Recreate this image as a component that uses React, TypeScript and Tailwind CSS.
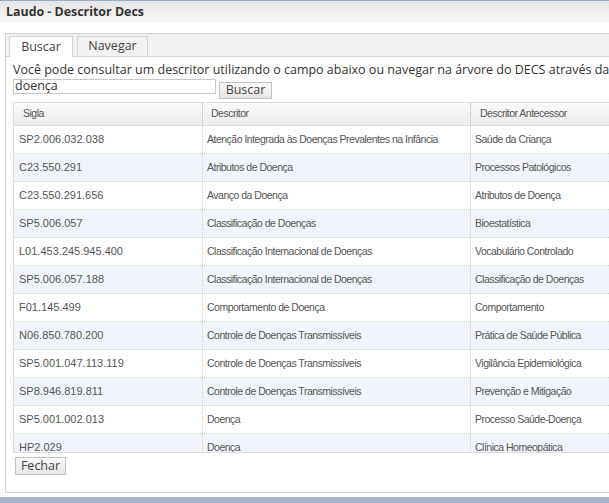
const rows = [
  ["SP2.006.032.038", "Atenção Integrada às Doenças Prevalentes na Infância", "Saúde da Criança"],
  ["C23.550.291", "Atributos de Doença", "Processos Patológicos"],
  ["C23.550.291.656", "Avanço da Doença", "Atributos de Doença"],
  ["SP5.006.057", "Classificação de Doenças", "Bioestatística"],
  ["L01.453.245.945.400", "Classificação Internacional de Doenças", "Vocabulário Controlado"],
  ["SP5.006.057.188", "Classificação Internacional de Doenças", "Classificação de Doenças"],
  ["F01.145.499", "Comportamento de Doença", "Comportamento"],
  ["N06.850.780.200", "Controle de Doenças Transmissíveis", "Prática de Saúde Pública"],
  ["SP5.001.047.113.119", "Controle de Doenças Transmissíveis", "Vigilância Epidemiológica"],
  ["SP8.946.819.811", "Controle de Doenças Transmissíveis", "Prevenção e Mitigação"],
  ["SP5.001.002.013", "Doença", "Processo Saúde-Doença"],
  ["HP2.029", "Doença", "Clínica Homeopática"],
];

const cols = "grid grid-cols-[189px_268px_220px]";
// narrow letters like the original grid font
const word = "text-[10.5px] tracking-[-0.5px]";

export default function App() {
  return (
    <div className="w-[609px] h-[503px] overflow-hidden bg-white flex flex-col font-['Open_Sans',sans-serif] text-[#333]">
      {/* title bar */}
      <div className="h-[23px] shrink-0 border-t border-[#9badbf] bg-gradient-to-b from-[#e4e4e4] to-[#f8f8f8] px-[6px] flex items-center">
        <span className="text-[12.4px] font-bold text-[#333] leading-none">Laudo - Descritor Decs</span>
      </div>
      <div className="h-[10px] shrink-0" />

      {/* panel */}
      <div className="ml-[5px] h-[460px] shrink-0 border-l border-t border-b border-[#d3d3d3] flex flex-col overflow-hidden">
        {/* tabs */}
        <div className="h-[23px] shrink-0 bg-[#f1f1f1] border-b border-[#d3d3d3] flex items-end pl-[3px] gap-[4px]">
          <div className="h-[21px] w-[64px] -mb-px bg-white border border-b-0 border-[#d3d3d3] flex items-center justify-center text-[12.5px] text-[#444]">
            Buscar
          </div>
          <div className="h-[20px] w-[71px] bg-[#f1f1f1] border border-b-0 border-[#d3d3d3] flex items-center justify-center text-[12.5px] text-[#444]">
            Navegar
          </div>
        </div>

        <div className="pl-[7px] pt-[4px] flex flex-col">
          <p className="text-[12.5px] leading-[17px] whitespace-nowrap text-[#333]">
            Você pode consultar um descritor utilizando o campo abaixo ou navegar na árvore do DECS através da
          </p>
          <div className="flex items-start gap-[3px] mt-[1px]">
            <div className="w-[203px] h-[15px] border border-[#c8c8c8] text-[12.5px] leading-[12px] pl-px text-[#333]">doença</div>
            <button className="mt-[3px] h-[17px] w-[53px] border border-[#c3c3c3] bg-gradient-to-b from-[#fafafa] to-[#e6e6e6] text-[12.5px] leading-none text-[#444] flex items-center justify-center">
              Buscar
            </button>
          </div>

          {/* table */}
          <div className="mt-[3px] h-[351px] border border-[#dcdcdc] border-r-0 overflow-hidden font-['Liberation_Sans',Arial,sans-serif] text-[#555]">
            <div className={`${cols} ${word} h-[23px] bg-gradient-to-b from-[#fbfbfb] to-[#ececec] border-b border-[#e2e2e2]`}>
              <div className="pl-[9px] flex items-center border-r border-dotted border-[#b8b8b8]">Sigla</div>
              <div className="pl-[8px] flex items-center border-r border-dotted border-[#b8b8b8]">Descritor</div>
              <div className="pl-[9px] flex items-center">Descritor Antecessor</div>
            </div>
            {rows.map((r, i) => (
              <div
                key={r[0]}
                className={`${cols} h-[28px] shrink-0 border-b border-dotted border-[#cfcfcf] ${i % 2 === 1 ? "bg-[#f1f5fb]" : "bg-white"}`}
              >
                <div className="pl-[5px] text-[11px] flex items-center border-r border-dotted border-[#cfcfcf] whitespace-nowrap">{r[0]}</div>
                <div className={`pl-[4px] ${word} flex items-center border-r border-dotted border-[#cfcfcf] whitespace-nowrap`}>{r[1]}</div>
                <div className={`pl-[4px] ${word} flex items-center whitespace-nowrap`}>{r[2]}</div>
              </div>
            ))}
          </div>

          <button className="mt-[4px] ml-[2px] h-[18px] w-[51px] border border-[#c3c3c3] bg-gradient-to-b from-[#fafafa] to-[#e6e6e6] text-[12.5px] leading-none text-[#444] flex items-center justify-center">
            Fechar
          </button>
        </div>
      </div>

      <div className="flex-1" />
      <div className="h-[6px] shrink-0 bg-[#a5b6c6]" />
    </div>
  );
}
